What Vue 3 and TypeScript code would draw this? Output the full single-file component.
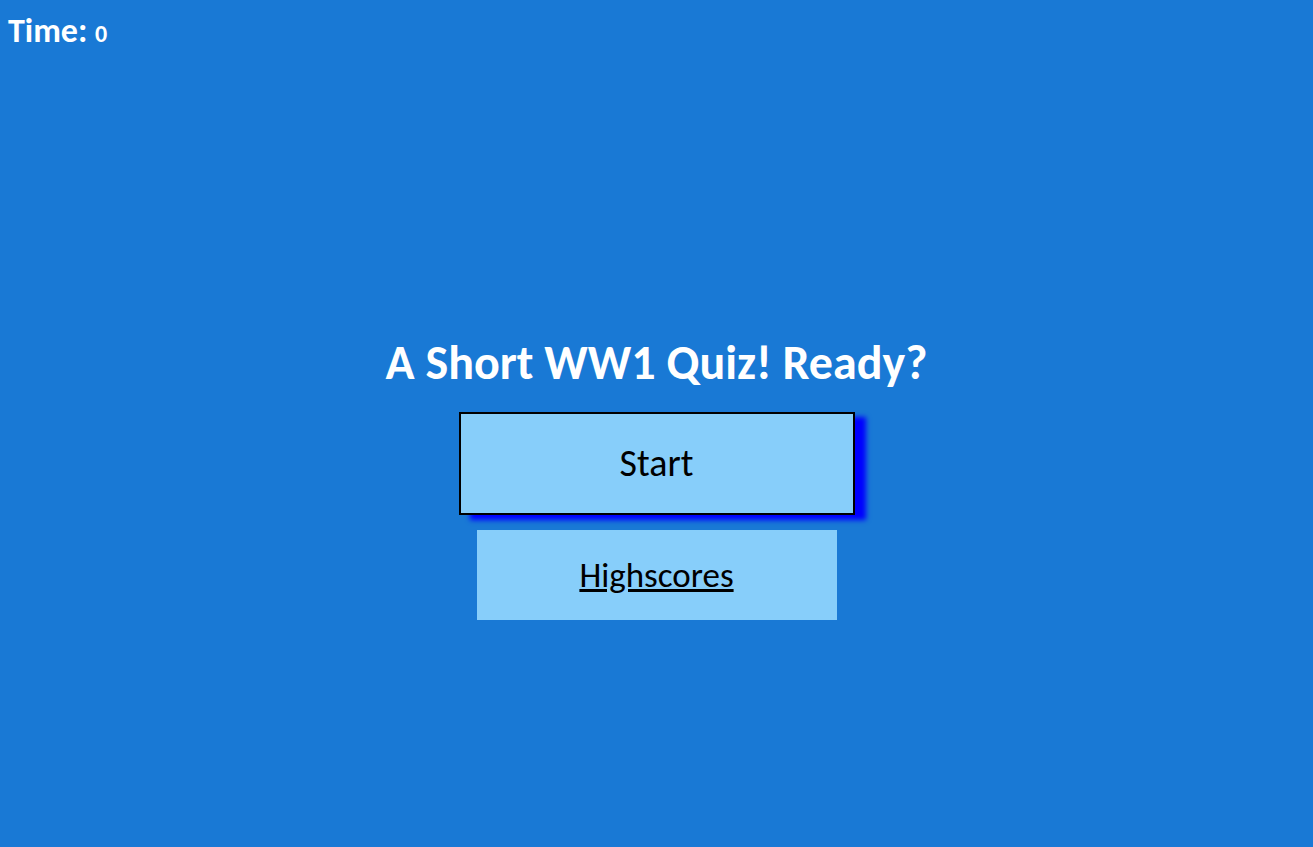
<script setup lang="ts">
import { ref } from 'vue'

const time = ref<number>(0)
</script>

<template>
  <div class="page">
    <header class="timer">Time: <span class="seconds">{{ time }}</span></header>
    <main class="quiz">
      <h1 class="title">A Short WW1 Quiz! Ready?</h1>
      <button class="start" type="button">Start</button>
      <a class="scores" href="#highscores">Highscores</a>
    </main>
  </div>
</template>

<style>
body {
  margin: 0;
  background: #1979d5;
}
</style>

<style scoped>
.page {
  box-sizing: border-box;
  min-height: 100vh;
  display: flex;
  flex-direction: column;
  padding: 8px;
  color: #fff;
  background: #1979d5;
  font-family: Calibri, Carlito, "Open Sans", "Noto Sans", sans-serif;
}

.timer {
  font-size: 34px;
  line-height: 46px;
  font-weight: 700;
}

.seconds {
  font-size: 24px;
}

.quiz {
  flex: 1;
  display: flex;
  flex-direction: column;
  align-items: center;
  justify-content: center;
  padding-top: 58px;
}

.title {
  margin: 0 0 20px;
  font-size: 48px;
  line-height: 58px;
  font-weight: 700;
  text-align: center;
}

.start {
  box-sizing: border-box;
  width: 396px;
  max-width: 100%;
  padding: 24px;
  border: 2px solid #000;
  background: #87cefa;
  box-shadow: 11px 5px 5px #00f;
  color: #000;
  font-family: inherit;
  font-size: 38px;
  line-height: 51px;
}

.scores {
  box-sizing: border-box;
  width: 360px;
  max-width: 100%;
  margin-top: 15px;
  padding: 22px;
  background: #87cefa;
  color: #000;
  font-size: 35px;
  line-height: 46px;
  text-align: center;
}
</style>
